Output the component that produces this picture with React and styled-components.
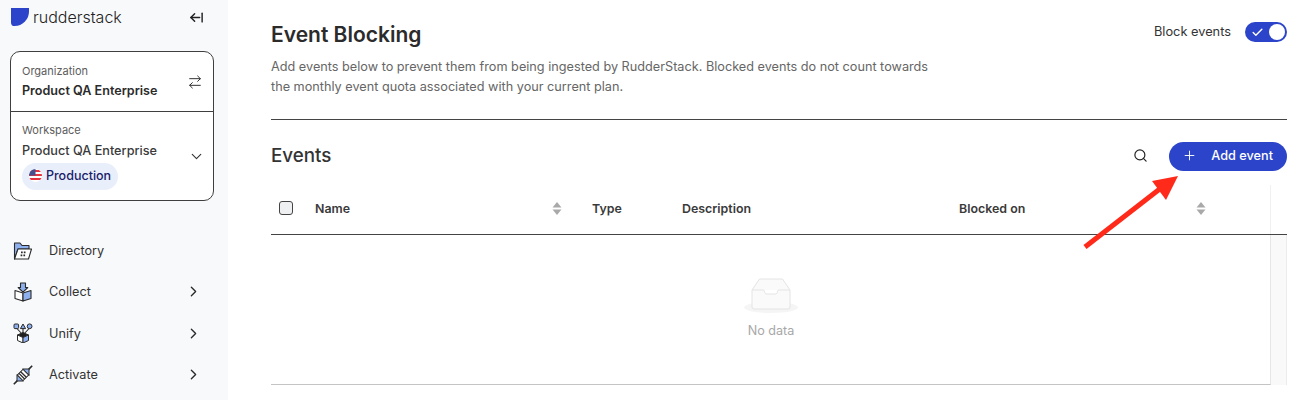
import React from 'react';
import styled, { createGlobalStyle } from 'styled-components';
import { ArrowLeftFromLine, ArrowRightLeft, Check, ChevronDown, ChevronRight, Plus, Search } from 'lucide-react';

const GlobalStyle = createGlobalStyle`
  html, body {
    margin: 0;
    padding: 0;
    background: #fff;
  }

  body {
    font-family: Inter, "Liberation Sans", sans-serif;
    color: #2b2b2b;
    overflow: hidden;
  }
`;

const DirectoryIcon = () => (
  <svg width="20" height="20" viewBox="0 0 20 20" fill="none">
    <path d="M1.5 18V2h5.5l2 2.5h7V8H5z" fill="#8fb0ee" stroke="#2a2a2a" strokeWidth="1.1" strokeLinejoin="round" />
    <path d="M5 8h13.5l-3 10H1.5z" fill="#fff" stroke="#2a2a2a" strokeWidth="1.1" strokeLinejoin="round" />
    <path d="M8 10.5h1.7v1.7H8zM10.8 10.5h1.7v1.7h-1.7zM7.6 13.5h1.7v1.7H7.6zM10.4 13.5h1.7v1.7h-1.7z" fill="#2a2a2a" />
  </svg>
);

const CollectIcon = () => (
  <svg width="20" height="20" viewBox="0 0 20 20" fill="none">
    <path d="M2 8.5l8 2.5v8l-8-2.5z" fill="#fff" stroke="#2a2a2a" strokeWidth="1.1" strokeLinejoin="round" />
    <path d="M18 8.5L10 11v8l8-2.5z" fill="#8fb0ee" stroke="#2a2a2a" strokeWidth="1.1" strokeLinejoin="round" />
    <path d="M7.5 1h5v4.5h2.3L10 10.2 5.2 5.5h2.3z" fill="#8fb0ee" stroke="#2a2a2a" strokeWidth="1.1" strokeLinejoin="round" />
  </svg>
);

const UnifyIcon = () => (
  <svg width="20" height="20" viewBox="0 0 20 20" fill="none">
    <path d="M3.5 5L10 12M10 5v7M16.5 5L10 12" stroke="#2a2a2a" strokeWidth="1.1" />
    <rect x="1" y="1" width="4.6" height="4.6" rx="1" fill="#8fb0ee" stroke="#2a2a2a" />
    <path d="M10 1l2.6 4.6H7.4z" fill="#8fb0ee" stroke="#2a2a2a" strokeLinejoin="round" />
    <circle cx="16.6" cy="3.3" r="2.4" fill="#8fb0ee" stroke="#2a2a2a" />
    <path d="M4.5 12L10 9.5l5.5 2.5L10 14.5z" fill="#1f1f1f" stroke="#2a2a2a" strokeLinejoin="round" />
    <path d="M4.5 12l5.5 2.5V20l-5.5-2.5z" fill="#fff" stroke="#2a2a2a" strokeLinejoin="round" />
    <path d="M15.5 12L10 14.5V20l5.5-2.5z" fill="#8fb0ee" stroke="#2a2a2a" strokeLinejoin="round" />
  </svg>
);

const ActivateIcon = () => (
  <svg width="20" height="20" viewBox="0 0 20 20" fill="none">
    <g transform="rotate(-45 10 10)">
      <path d="M-3 10H2M18 10h5" stroke="#2a2a2a" strokeWidth="1.6" />
      <path d="M1.5 10L6 5.5V14.5z" fill="#8fb0ee" stroke="#2a2a2a" strokeLinejoin="round" />
      <path d="M18.5 10L14 5.5V14.5z" fill="#8fb0ee" stroke="#2a2a2a" strokeLinejoin="round" />
      <rect x="6" y="6" width="8" height="8" fill="#fff" stroke="#2a2a2a" />
      <path d="M8.3 6v8M10.7 6v8" stroke="#2a2a2a" strokeWidth="1.3" />
    </g>
  </svg>
);

const navItems = [
  { label: 'Directory', icon: <DirectoryIcon /> },
  { label: 'Collect', icon: <CollectIcon />, more: true },
  { label: 'Unify', icon: <UnifyIcon />, more: true },
  { label: 'Activate', icon: <ActivateIcon />, more: true },
];

const columns = [
  { label: 'Name', sortable: true, end: 30 },
  { label: 'Type' },
  { label: 'Description' },
  { label: 'Blocked on', sortable: true, end: 64, divider: true },
];

const App = () => (
  <Page>
    <GlobalStyle />
    <Sidebar>
      <LogoRow>
        <LogoMark />
        <LogoText>rudderstack</LogoText>
        <CollapseButton><ArrowLeftFromLine size={15} strokeWidth={2.3} /></CollapseButton>
      </LogoRow>

      <SwitcherCard>
        <OrgSection>
          <div>
            <SmallLabel>Organization</SmallLabel>
            <OrgName>Product QA Enterprise</OrgName>
          </div>
          <ArrowRightLeft size={16} strokeWidth={1.5} />
        </OrgSection>
        <WorkspaceSection>
          <div>
            <SmallLabel>Workspace</SmallLabel>
            <WorkspaceName>Product QA Enterprise</WorkspaceName>
            <EnvPill>
              <FlagIcon width="13" height="13" viewBox="0 0 13 13">
                <defs>
                  <clipPath id="flag-clip"><circle cx="6.5" cy="6.5" r="6.5" /></clipPath>
                </defs>
                <g clipPath="url(#flag-clip)">
                  <rect width="13" height="13" fill="#fff" />
                  <path d="M0 1h13v2H0zM0 5h13v2H0zM0 9h13v2H0z" fill="#e5343f" />
                  <rect width="6.5" height="6.5" fill="#46508f" />
                </g>
              </FlagIcon>
              Production
            </EnvPill>
          </div>
          <ChevronDown size={17} strokeWidth={1.6} />
        </WorkspaceSection>
      </SwitcherCard>

      <Nav>
        {navItems.map((item) => (
          <NavRow key={item.label}>
            <NavIcon>{item.icon}</NavIcon>
            <NavLabel>{item.label}</NavLabel>
            {item.more && <ChevronRight size={17} strokeWidth={1.9} />}
          </NavRow>
        ))}
      </Nav>
    </Sidebar>

    <Main>
      <PageHeader>
        <div>
          <Title>Event Blocking</Title>
          <Description>
            Add events below to prevent them from being ingested by RudderStack. Blocked events do not count towards
            the monthly event quota associated with your current plan.
          </Description>
        </div>
        <BlockToggle>
          <ToggleLabel>Block events</ToggleLabel>
          <Toggle>
            <Check size={13} strokeWidth={2.6} color="#fff" />
            <Knob />
          </Toggle>
        </BlockToggle>
      </PageHeader>

      <EventsBar>
        <EventsTitle>Events</EventsTitle>
        <EventsActions>
          <SearchIcon size={15} strokeWidth={1.9} color="#222" />
          <AddButton>
            <Plus size={15} strokeWidth={1.5} />
            Add event
          </AddButton>
        </EventsActions>
      </EventsBar>

      <HeadRow>
        <CheckCell><Checkbox /></CheckCell>
        {columns.map((col) => (
          <HeadCell key={col.label} $end={col.end} $divider={col.divider}>
            {col.label}
            {col.sortable && (
              <svg width="10" height="13" viewBox="0 0 10 13">
                <path d="M5 0l4.5 5.5h-9z" fill="#a9a9a9" />
                <path d="M5 13L.5 7.5h9z" fill="#a9a9a9" />
              </svg>
            )}
          </HeadCell>
        ))}
        <div />
      </HeadRow>

      <TableBody>
        <EmptyState>
          <svg width="54" height="36" viewBox="0 0 54 36" fill="none">
            <ellipse cx="27" cy="29.5" rx="27" ry="5.5" fill="#f5f5f5" />
            <path d="M8 12L15.5 1h23L46 12v17a2 2 0 0 1-2 2H10a2 2 0 0 1-2-2z" fill="#fafafa" stroke="#e4e4e4" />
            <path d="M8 12h11c1 0 1.5.6 1.5 1.6 0 1.4 1 2.4 2.4 2.4h8.2c1.4 0 2.4-1 2.4-2.4 0-1 .5-1.6 1.5-1.6H46" fill="#fff" stroke="#e4e4e4" />
          </svg>
          <EmptyText>No data</EmptyText>
        </EmptyState>
        <ScrollGutter />
      </TableBody>

      <RedArrow width="100" height="78" viewBox="0 0 100 78">
        <path d="M2 73L78 14" stroke="#ff2a1a" strokeWidth="5" />
        <path d="M95 2L69 7l14 19z" fill="#ff2a1a" />
      </RedArrow>
    </Main>
  </Page>
);

const Page = styled.div`
  display: flex;
  height: 100vh;
  overflow: hidden;
`;

const Sidebar = styled.aside`
  width: 228px;
  flex-shrink: 0;
  box-sizing: border-box;
  padding: 0 14px 0 10px;
  background: #f8f9fb;
`;

const LogoRow = styled.div`
  display: flex;
  align-items: center;
  height: 51px;
  padding: 0 0 17px 1px;
  box-sizing: border-box;
`;

const LogoMark = styled.div`
  width: 18px;
  height: 18px;
  background: #2b44c9;
  border-bottom-right-radius: 16px;
  border-bottom-left-radius: 4px;
`;

const LogoText = styled.span`
  margin-left: 4px;
  font-size: 16px;
  font-weight: 300;
  color: #222;
`;

const CollapseButton = styled.span`
  display: flex;
  margin-left: auto;
  margin-right: 10px;
  color: #222;
`;

const SwitcherCard = styled.div`
  box-sizing: border-box;
  width: 204px;
  height: 150px;
  background: #fff;
  border: 1px solid #3f3f3f;
  border-radius: 10px;
`;

const OrgSection = styled.div`
  display: flex;
  align-items: center;
  justify-content: space-between;
  height: 60px;
  box-sizing: border-box;
  padding: 0 10px 0 11px;
  border-bottom: 1px solid #3f3f3f;
  color: #333;
`;

const WorkspaceSection = styled.div`
  display: flex;
  align-items: center;
  justify-content: space-between;
  padding: 11px 8px 0 11px;
  color: #333;
`;

const SmallLabel = styled.div`
  font-size: 11px;
  line-height: 14px;
  color: #5c5c5c;
`;

const OrgName = styled.div`
  margin-top: 4px;
  font-size: 12.6px;
  line-height: 18px;
  font-weight: 600;
  color: #2b2b2b;
`;

const WorkspaceName = styled.div`
  margin-top: 5px;
  font-size: 12.7px;
  line-height: 18px;
  font-weight: 500;
  color: #3a3a3a;
`;

const EnvPill = styled.div`
  display: inline-flex;
  align-items: center;
  gap: 4px;
  height: 27px;
  box-sizing: border-box;
  margin-top: 3px;
  padding: 0 7px 2px;
  border-radius: 14px;
  background: #e8effb;
  color: #1a2069;
  font-size: 12.5px;
  font-weight: 500;
`;

const FlagIcon = styled.svg`
  flex-shrink: 0;
`;

const Nav = styled.nav`
  display: flex;
  flex-direction: column;
  margin-top: 29px;
`;

const NavRow = styled.div`
  display: flex;
  align-items: center;
  height: 41.3px;
  padding-left: 3px;
  padding-right: 12px;
  color: #2b2b2b;
`;

const NavIcon = styled.span`
  display: flex;
  width: 36px;
`;

const NavLabel = styled.span`
  flex: 1;
  font-size: 12.7px;
  color: #333;
`;

const Main = styled.main`
  position: relative;
  flex: 1;
  min-width: 0;
  box-sizing: border-box;
  padding: 0 18px 0 43px;
`;

const PageHeader = styled.header`
  display: flex;
  justify-content: space-between;
  align-items: flex-start;
  height: 120px;
  box-sizing: border-box;
  padding-top: 21px;
  border-bottom: 1px solid #444;
`;

const Title = styled.h1`
  margin: 0;
  font-size: 21px;
  line-height: 28px;
  font-weight: 600;
  color: #2b2b2b;
`;

const Description = styled.p`
  width: 665px;
  margin: 8px 0 0;
  font-size: 12.7px;
  line-height: 20px;
  color: #666;
`;

const BlockToggle = styled.div`
  display: flex;
  align-items: center;
  gap: 14px;
  margin-top: 1px;
  font-size: 12.8px;
  color: #333;
`;

const ToggleLabel = styled.span`
  margin-bottom: 2px;
`;

const Toggle = styled.div`
  display: flex;
  align-items: center;
  justify-content: space-between;
  box-sizing: border-box;
  width: 42px;
  height: 20px;
  padding: 0 2px 0 6px;
  border-radius: 10px;
  background: #2b44c9;
`;

const Knob = styled.span`
  width: 16px;
  height: 16px;
  border-radius: 50%;
  background: #fff;
`;

const EventsBar = styled.div`
  display: flex;
  align-items: center;
  justify-content: space-between;
  height: 65px;
  box-sizing: border-box;
  padding-top: 8px;
`;

const EventsTitle = styled.h2`
  margin: -3px 0 0;
  font-size: 18.8px;
  font-weight: 500;
  color: #333;
`;

const EventsActions = styled.div`
  display: flex;
  align-items: center;
  gap: 21px;
`;

const SearchIcon = styled(Search)`
  margin-top: -3px;
`;

const AddButton = styled.button`
  display: flex;
  align-items: center;
  justify-content: space-between;
  box-sizing: border-box;
  width: 118px;
  height: 29px;
  padding: 0 14px 2px 13px;
  border: none;
  border-radius: 15px;
  background: #2b44c9;
  color: #fff;
  font-family: inherit;
  font-size: 12.7px;
  font-weight: 500;
`;

const HeadRow = styled.div`
  display: grid;
  grid-template-columns: 44px 277px 90px 277px 312px 16px;
  height: 50px;
  box-sizing: border-box;
  border-bottom: 1px solid #444;
`;

const CheckCell = styled.div`
  display: flex;
  align-items: center;
  padding: 5px 0 8px 8px;
`;

const Checkbox = styled.span`
  width: 14px;
  height: 14px;
  box-sizing: border-box;
  border: 1px solid #444;
  border-radius: 3px;
  background: #eef0f2;
`;

const HeadCell = styled.div`
  display: flex;
  align-items: center;
  justify-content: space-between;
  padding: 5px ${(p) => p.$end || 0}px 8px 0;
  font-size: 12.4px;
  font-weight: 600;
  color: #3a3a3a;
  border-right: ${(p) => (p.$divider ? '1px solid #f1f1f1' : 'none')};
`;

const TableBody = styled.div`
  display: grid;
  grid-template-columns: 1fr 16px;
  height: 150px;
`;

const EmptyState = styled.div`
  display: flex;
  flex-direction: column;
  align-items: center;
  padding: 43px 0 0 1px;
  box-sizing: border-box;
  border-bottom: 1px solid #c4c4c4;
  border-right: 1px solid #e6e6e6;
`;

const EmptyText = styled.div`
  margin-top: 9px;
  font-size: 12.6px;
  color: #a8a8a8;
`;

const ScrollGutter = styled.div`
  background: #f9f9f9;
  border-right: 1px solid #ececec;
`;

const RedArrow = styled.svg`
  position: absolute;
  left: 855px;
  top: 174px;
`;

export default App;
